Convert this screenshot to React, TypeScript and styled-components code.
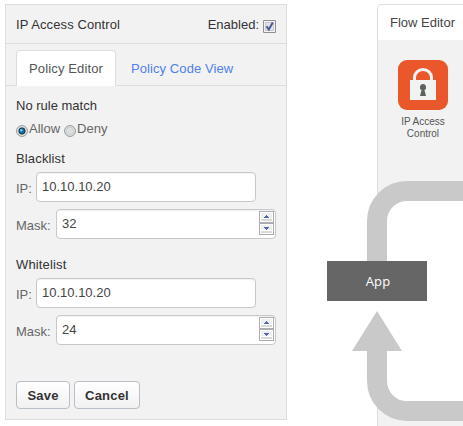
import React from 'react';
import styled, { createGlobalStyle } from 'styled-components';

const GlobalStyle = createGlobalStyle`
  * { box-sizing: border-box; }
  body { margin: 0; background: #fff; overflow: hidden; font: 13px/16px "Liberation Sans", Arial, sans-serif; color: #333; }
`;

const Page = styled.main`
  display: flex;
  width: 463px;
  height: 426px;
  padding: 4px 0 0 5px;
  overflow: hidden;
`;

const Panel = styled.section`
  width: 282px;
  height: 416px;
  flex: none;
  background: #f2f2f2;
  border: 1px solid #ddd;
`;

const PanelHeader = styled.header`
  display: flex;
  justify-content: space-between;
  height: 39px;
  padding: 12px 10px 0;
  border-bottom: 1px solid #ddd;
`;

const PanelTitle = styled.span`
  letter-spacing: 0.1px;
`;

const Enabled = styled.label`
  display: flex;
  gap: 4px;
`;

const CheckIcon = styled.svg`
  width: 13px;
  height: 13px;
  margin-top: 3px;
`;

const Tabs = styled.nav`
  display: flex;
  height: 42px;
  padding: 6px 10px 0;
  border-bottom: 1px solid #ddd;
`;

const Tab = styled.a<{ $active?: boolean }>`
  height: ${p => (p.$active ? 36 : 35)}px;
  width: ${p => (p.$active ? 100 : 130)}px;
  padding: ${p => (p.$active ? '10px 0 0 12px' : '11px 0 0 15px')};
  border: ${p => (p.$active ? '1px solid #ddd' : '0')};
  border-bottom: 0;
  border-radius: 4px 4px 0 0;
  background: ${p => (p.$active ? '#fff' : 'transparent')};
  color: ${p => (p.$active ? '#555' : '#4f80ee')};
  letter-spacing: ${p => (p.$active ? 0.14 : 0.08)}px;
`;

const Form = styled.form`
  padding: 12px 10px 0;
`;

const GroupTitle = styled.h3`
  margin: 0;
  height: 23px;
  font: inherit;
  color: #333;
`;

const RadioRow = styled.div`
  display: flex;
  height: 30px;
`;

const RadioLabel = styled.label`
  display: flex;
  gap: 1px;
  margin-right: 4px;
  color: #666;
`;

const RadioIcon = styled.svg`
  width: 12px;
  height: 12px;
  margin-top: 4px;
`;

const Group = styled.fieldset`
  margin: 0;
  padding: 0;
  border: 0;
  height: 106px;
`;

const Field = styled.div<{ $label: number }>`
  display: grid;
  grid-template-columns: ${p => p.$label}px 220px;
  height: 28px;
  margin-bottom: 9px;
`;

const GroupHeading = styled(GroupTitle)`
  height: 21px;
  letter-spacing: 0.15px;
`;

const FieldLabel = styled.label`
  padding-top: 9px;
  color: #666;
`;

const InputBox = styled.div`
  display: flex;
  justify-content: space-between;
  border: 1px solid #c8c8c8;
  border-radius: 4px;
  background: #fff;
  box-shadow: inset 0 1px 1px rgba(0, 0, 0, 0.06);
  padding: 1px 1px 1px 5px;
  color: #444;
  line-height: 26px;
`;

const SpinIcon = styled.svg`
  width: 15px;
  height: 24px;
`;

const Actions = styled.div`
  display: flex;
  gap: 4px;
  padding-top: 18px;
`;

const Button = styled.button<{ $width: number }>`
  width: ${p => p.$width}px;
  height: 28px;
  padding: 2px 0 0;
  border: 1px solid #b8bfc6;
  border-radius: 4px;
  background: linear-gradient(#fff, #f1f1f1);
  color: #333;
  font: bold 13px/16px "Liberation Sans", Arial, sans-serif;
  letter-spacing: 0.2px;
`;

const Flow = styled.section`
  position: relative;
  flex: none;
  width: 140px;
  height: 422px;
  margin-left: 36px;
`;

const FlowPanel = styled.div`
  width: 100px;
  height: 422px;
  margin-left: 54px;
  border: 1px solid #ddd;
  border-bottom: 0;
  border-radius: 5px 0 0 0;
  background: #f2f2f2;
  overflow: hidden;
`;

const FlowHeader = styled.header`
  height: 35px;
  padding: 10px 0 0 12px;
  background: #fff;
  color: #444;
`;

const Policy = styled.figure`
  display: flex;
  flex-direction: column;
  align-items: center;
  width: 90px;
  margin: 20px 0 0;
  color: #555;
  font-size: 10px;
  line-height: 12px;
  text-align: center;
`;

const LockIcon = styled.svg`
  width: 50px;
  height: 50px;
  margin-bottom: 6px;
`;

const Pipe = styled.svg`
  position: absolute;
  left: 4px;
  top: 0;
  width: 136px;
  height: 422px;
`;

const AppNode = styled.div`
  position: absolute;
  left: 4px;
  top: 257px;
  width: 100px;
  height: 40px;
  padding-left: 2px;
  background: #666;
  color: #fff;
  font: 13px/40px "Open Sans", sans-serif;
  letter-spacing: 0.2px;
  text-align: center;
`;

function Radio({ label, checked }: { label: string; checked?: boolean }) {
  return (
    <RadioLabel>
      <RadioIcon viewBox="0 0 12 12">
        <circle cx="6" cy="6" r="5.4" fill="#f4f4f4" stroke="#8e8f8f" />
        <circle cx="6" cy="6" r="3.9" fill="#dcdfe1" stroke="#bbb" strokeWidth=".6" />
        {checked && <circle cx="6" cy="6" r="3.1" fill="#176b9c" stroke="#123653" />}
        {checked && <circle cx="5.3" cy="5.2" r="1.3" fill="#72c8ed" />}
      </RadioIcon>
      {label}
    </RadioLabel>
  );
}

function Spinner() {
  return (
    <SpinIcon viewBox="0 0 15 24" shapeRendering="crispEdges">
      <path fill="#acacb3" d="M0 0H15V24H0Z" />
      <path fill="#fff" d="M1 1H14V11H1ZM1 13H14V23H1Z" />
      <path fill="#efefef" d="M2 2H13V7H2ZM2 14H13V19H2Z" />
      <path fill="#d9d9d9" d="M2 8H13V10H2ZM2 20H13V22H2Z" />
      <path fill="#5266ad" d="M7 4H8V5H9V6H10V7H5V6H6V5H7ZM5 16H10V17H9V18H8V19H7V18H6V17H5Z" />
    </SpinIcon>
  );
}

function AddressGroup({ title, ip, mask }: { title: string; ip: string; mask: string }) {
  return (
    <Group>
      <GroupHeading>{title}</GroupHeading>
      <Field $label={20}>
        <FieldLabel>IP:</FieldLabel>
        <InputBox>{ip}</InputBox>
      </Field>
      <Field $label={40}>
        <FieldLabel>Mask:</FieldLabel>
        <InputBox>{mask}<Spinner /></InputBox>
      </Field>
    </Group>
  );
}

export default function App() {
  return (
    <>
      <GlobalStyle />
      <Page>
        <Panel>
          <PanelHeader>
            <PanelTitle>IP Access Control</PanelTitle>
            <Enabled>
              Enabled:
              <CheckIcon viewBox="0 0 13 13">
                <path d="M.5.5h12v12H.5Z" fill="#f4f4f4" stroke="#8e8f8f" />
                <path d="M2.5 2.5h8v8h-8Z" fill="#e0e3e6" stroke="#c5c9cd" />
                <path d="M3.5 6.2 5.8 9.5 9.8 2.6" fill="none" stroke="#465895" strokeWidth="2" />
              </CheckIcon>
            </Enabled>
          </PanelHeader>
          <Tabs>
            <Tab $active>Policy Editor</Tab>
            <Tab>Policy Code View</Tab>
          </Tabs>
          <Form>
            <GroupTitle>No rule match</GroupTitle>
            <RadioRow>
              <Radio label="Allow" checked />
              <Radio label="Deny" />
            </RadioRow>
            <AddressGroup title="Blacklist" ip="10.10.10.20" mask="32" />
            <AddressGroup title="Whitelist" ip="10.10.10.20" mask="24" />
            <Actions>
              <Button type="button" $width={54}>Save</Button>
              <Button type="button" $width={66}>Cancel</Button>
            </Actions>
          </Form>
        </Panel>
        <Flow>
          <FlowPanel>
            <FlowHeader>Flow Editor</FlowHeader>
            <Policy>
              <LockIcon viewBox="0 0 50 50">
                <rect width="50" height="50" rx="9" fill="#e9572b" />
                <path d="M16.5 21v-3.5a8.5 8 0 0 1 17 0V21" fill="none" stroke="#f0f3f2" strokeWidth="3" />
                <path d="M12 20h26v20H12Z" fill="#f0f3f2" />
                <path d="M25 24a3.2 3.2 0 0 0-1.5 6L22 36h6l-1.5-6A3.2 3.2 0 0 0 25 24Z" fill="#5c635c" />
              </LockIcon>
              <figcaption>IP Access<br />Control</figcaption>
            </Policy>
          </FlowPanel>
          <Pipe viewBox="0 0 136 422">
            <path d="M136 187H80Q50 187 50 217V377Q50 407 80 407H136Z" fill="#fff" />
            <path d="M48 217h4v160h-4Z" fill="#fff" />
            <path d="M136 187H80A30 30 0 0 0 50 217V260M50 345V377A30 30 0 0 0 80 407H136" fill="none" stroke="#c9c9c9" strokeWidth="20" />
            <path d="M50 307 75 347H25Z" fill="#c9c9c9" />
          </Pipe>
          <AppNode>App</AppNode>
        </Flow>
      </Page>
    </>
  );
}
